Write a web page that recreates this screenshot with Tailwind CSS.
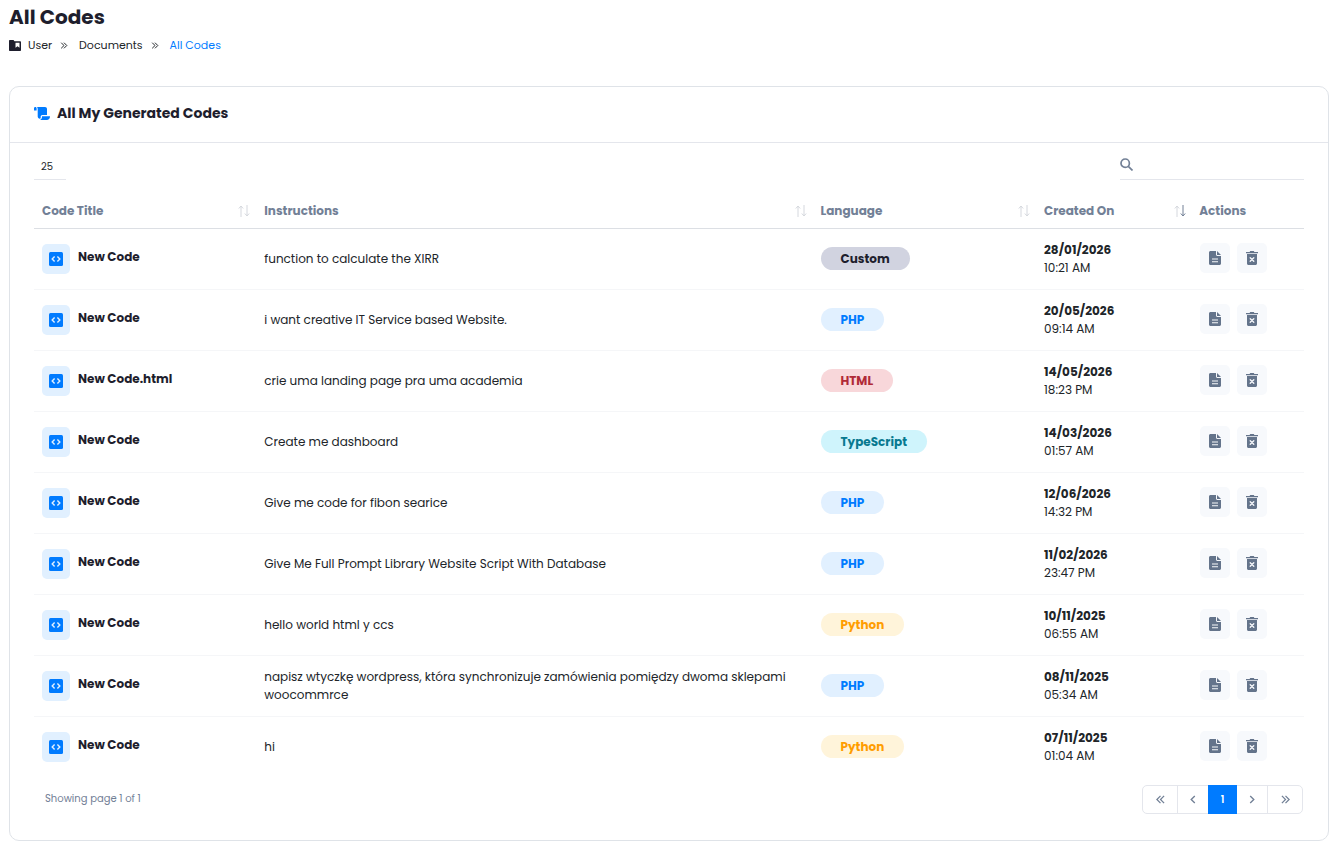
<!DOCTYPE html>
<html lang="en">
<head>
    <meta charset="UTF-8" />
    <meta name="viewport" content="width=device-width, initial-scale=1.0"/>
    <title>All Codes</title>
    <script src="https://cdn.jsdelivr.net/npm/@tailwindcss/browser@4"></script>
</head>
<body class="bg-white font-[Poppins,Inter,sans-serif] text-[12px] leading-[18px] text-[#212529]">

    <!-- icons -->
    <svg class="hidden">
        <symbol id="i-code" viewBox="0 0 14 14">
            <rect width="14" height="14" rx="1.5" fill="#007bff"/>
            <path d="M5.6 4.6 3.2 7l2.4 2.4M8.4 4.6 10.8 7 8.4 9.4" fill="none" stroke="#e1f0ff" stroke-width="1.4"/>
        </symbol>
        <symbol id="i-file" viewBox="0 0 12 14">
            <path fill="currentColor" d="M1.500 0H7v3.500C7 4.300 7.700 5 8.500 5H12v7.500c0 .8-.7 1.500-1.500 1.500h-9C.7 14 0 13.300 0 12.500v-11C0 .7.7 0 1.500 0zM8 0l4 4H8z"/>
            <path d="M3 8h6M3 10.800h6" stroke="#f7f9fc" stroke-width="1.100"/>
        </symbol>
        <symbol id="i-trash" viewBox="0 0 12 14">
            <path fill="currentColor" d="M0 .9h3.6L4.2 0h3.6l.6.9H12v1.4H0zM1 3.1h10v9.4c0 .8-.7 1.5-1.5 1.5h-7C1.7 14 1 13.3 1 12.5z"/>
            <path d="m4.2 6.700 3.600 3.600M7.800 6.700l-3.600 3.600" stroke="#f7f9fc" stroke-width="1.300" stroke-linecap="round"/>
        </symbol>
        <symbol id="i-left" viewBox="0 0 6 10"><path d="M5 1 1 5l4 4" fill="none" stroke="currentColor" stroke-width="1.500"/></symbol>
        <symbol id="i-right" viewBox="0 0 6 10"><path d="m1 1 4 4-4 4" fill="none" stroke="currentColor" stroke-width="1.500"/></symbol>
        <symbol id="i-first" viewBox="0 0 10 10"><path d="M5 1 1 5l4 4M9 1 5 5l4 4" fill="none" stroke="currentColor" stroke-width="1.400"/></symbol>
        <symbol id="i-last" viewBox="0 0 10 10"><path d="m1 1 4 4-4 4M5 1l4 4-4 4" fill="none" stroke="currentColor" stroke-width="1.400"/></symbol>
        <symbol id="i-up" viewBox="0 0 6 12"><path d="M3 12V1M.8 3.500 3 1l2.200 2.500" fill="none" stroke="currentColor"/></symbol>
        <symbol id="i-down" viewBox="0 0 6 12"><path d="M3 0v11M.8 8.500 3 11l2.200-2.500" fill="none" stroke="currentColor"/></symbol>
    </svg>

    <header class="px-[9px] pt-1">
        <h1 class="text-[20px] leading-[26px] font-bold text-[#1e1e2d]">All Codes</h1>
        <nav class="mt-[6px] flex items-center text-[11px]" aria-label="Breadcrumb">
            <svg class="mr-[7px] h-[11px] w-3" viewBox="0 0 12 11">
                <path fill="#1e1e2d" fill-rule="evenodd" d="M1 0h3.500L5.500 1.300H11c.6 0 1 .4 1 1V10c0 .6-.4 1-1 1H1c-.6 0-1-.4-1-1V1c0-.6.4-1 1-1zm5.500 2.800v5L8.500 6.300l2 1.500v-5z"/>
            </svg>
            <a href="#">User</a>
            <svg class="mr-[11px] ml-2 h-[7px] w-2" aria-hidden="true"><use href="#i-last"/></svg>
            <a href="#">Documents</a>
            <svg class="mr-[11px] ml-2 h-[7px] w-2" aria-hidden="true"><use href="#i-last"/></svg>
            <a href="#" class="text-[#007bff]">All Codes</a>
        </nav>
    </header>

    <main class="mx-[9px] mt-8 rounded-[10px] border border-[#dfe3e8]">
        <div class="flex h-14 items-center border-b border-[#e4e6ec] px-6 pb-[3px]">
            <svg class="mr-[7px] h-[13px] w-4" viewBox="0 0 16 13">
                <path fill="#007bff" d="M0 1.300C0 .6.500 0 1.300 0s1.300.6 1.300 1.300V3.500H0zM3 0h8c1.200 0 2 .9 2 2v6H8.500c-1.200 0-1.800.8-1.800 1.800v1c0 .5-.4.900-.9.900-1.200 0-2.100-.9-2.100-2.100V2C3.700 1.200 3.500.500 3 0zM8 9.200h7.800c.2 0 .2.200.2.400 0 2-1.400 3.400-3.200 3.400H5.900C7.300 12.500 8 11.300 8 9.800z"/>
            </svg>
            <h2 class="text-[14px] font-bold text-[#1e1e2d]">All My Generated Codes</h2>
        </div>

        <div class="px-6 pt-[11px] pb-[26px]">
            <div class="flex h-[26px] items-end justify-between">
                <select aria-label="Rows per page" class="h-[26px] w-8 appearance-none border-b border-[#e4e6ec] pt-px pl-[7px] text-[10px] outline-none">
                    <option>25</option>
                </select>
                <label class="flex h-[26px] w-[184px] items-start border-b border-[#e4e6ec]">
                    <svg class="mt-1 size-[13px] shrink-0 text-[#728096]" viewBox="0 0 13 13" fill="none" stroke="currentColor" stroke-width="1.700"><circle cx="5.200" cy="5.200" r="4.200"/><path d="m8.300 8.300 4.200 4.200"/></svg>
                    <input type="search" aria-label="Search" class="h-6 w-full min-w-0 px-2 outline-none">
                </label>
            </div>

            <table class="w-full table-fixed text-left">
                <thead class="border-b border-[#dcdfe4] text-[#728096]">
                    <tr class="h-12">
                        <th class="w-[17.5%] pt-[14px] pr-[6px] pl-2 font-bold"><div class="flex items-center justify-between">Code Title<span class="flex text-[#d5d8de]"><svg class="h-3 w-[6px]"><use href="#i-up"/></svg><svg class="h-3 w-[6px]"><use href="#i-down"/></svg></span></div></th>
                        <th class="w-[43.8%] pt-[14px] pr-[6px] pl-2 font-bold"><div class="flex items-center justify-between">Instructions<span class="flex text-[#d5d8de]"><svg class="h-3 w-[6px]"><use href="#i-up"/></svg><svg class="h-3 w-[6px]"><use href="#i-down"/></svg></span></div></th>
                        <th class="w-[17.6%] pt-[14px] pr-[6px] pl-2 font-bold"><div class="flex items-center justify-between">Language<span class="flex text-[#d5d8de]"><svg class="h-3 w-[6px]"><use href="#i-up"/></svg><svg class="h-3 w-[6px]"><use href="#i-down"/></svg></span></div></th>
                        <th class="w-[12.3%] pt-[14px] pr-[6px] pl-2 font-bold"><div class="flex items-center justify-between">Created On<span class="flex text-[#d5d8de]"><svg class="h-3 w-[6px]"><use href="#i-up"/></svg><svg class="h-3 w-[6px] text-[#728096]"><use href="#i-down"/></svg></span></div></th>
                        <th class="pt-[14px] pl-[7px] font-bold">Actions</th>
                    </tr>
                </thead>
                <tbody id="codes-body"></tbody>
            </table>

            <div class="mt-2 flex items-center justify-between">
                <p class="pb-[2px] pl-[11px] text-[10px] text-[#728096]">Showing page 1 of 1</p>
                <nav class="mr-px flex h-[29px] rounded-[5px] border border-[#e4e6ec] text-[#728096]" aria-label="Pagination">
                    <button aria-label="First page" class="flex w-[35px] items-center justify-center border-r border-[#e4e6ec]"><svg class="size-[9px]"><use href="#i-first"/></svg></button>
                    <button aria-label="Previous page" class="flex w-[30px] items-center justify-center"><svg class="h-[9px] w-[6px]"><use href="#i-left"/></svg></button>
                    <button class="-my-px w-[29px] bg-[#007bff] text-[10px] font-semibold text-white">1</button>
                    <button aria-label="Next page" class="flex w-[31px] items-center justify-center border-r border-[#e4e6ec]"><svg class="h-[9px] w-[6px]"><use href="#i-right"/></svg></button>
                    <button aria-label="Last page" class="flex w-[34px] items-center justify-center"><svg class="size-[9px]"><use href="#i-last"/></svg></button>
                </nav>
            </div>
        </div>
    </main>

    <script>
        const badges = {
            Custom: 'bg-[#d1d3e0] text-[#1e1e2d]',
            PHP: 'bg-[#e1f0ff] text-[#007bff]',
            HTML: 'bg-[#f8d7da] text-[#b02a37]',
            TypeScript: 'bg-[#cff4fc] text-[#087990]',
            Python: 'bg-[#fff4da] text-[#ff9d00]',
        };

        const codes = [
            ['New Code', 'function to calculate the XIRR', 'Custom', '28/01/2026', '10:21 AM'],
            ['New Code', 'i want creative IT Service based Website.', 'PHP', '20/05/2026', '09:14 AM'],
            ['New Code.html', 'crie uma landing page pra uma academia', 'HTML', '14/05/2026', '18:23 PM'],
            ['New Code', 'Create me dashboard', 'TypeScript', '14/03/2026', '01:57 AM'],
            ['New Code', 'Give me code for fibon searice', 'PHP', '12/06/2026', '14:32 PM'],
            ['New Code', 'Give Me Full Prompt Library Website Script With Database', 'PHP', '11/02/2026', '23:47 PM'],
            ['New Code', 'hello world html y ccs', 'Python', '10/11/2025', '06:55 AM'],
            ['New Code', 'napisz wtyczkę wordpress, która synchronizuje zamówienia pomiędzy dwoma sklepami woocommrce', 'PHP', '08/11/2025', '05:34 AM'],
            ['New Code', 'hi', 'Python', '07/11/2025', '01:04 AM'],
        ];

        document.getElementById('codes-body').innerHTML = codes.map(([title, text, lang, date, time]) => `
            <tr class="h-[61px] border-b border-[#f5f6f8] last:border-b-0">
                <td class="px-2">
                    <div class="flex items-start">
                        <span class="mr-2 flex h-[30px] w-7 items-center justify-center rounded-[5px] bg-[#e1f0ff]"><svg class="size-[14px]"><use href="#i-code"/></svg></span>
                        <a href="#" class="mt-1 font-bold text-[#1e1e2d]">${title}</a>
                    </div>
                </td>
                <td class="px-2">${text}</td>
                <td class="px-2"><span class="inline-block h-[23px] rounded-full px-5 align-middle leading-[23px] font-bold ${badges[lang]}">${lang}</span></td>
                <td class="px-2"><span class="block font-bold">${date}</span><span class="block">${time}</span></td>
                <td class="pb-px pl-2">
                    <div class="flex gap-[7px] text-[#64748b]">
                        <button aria-label="View" class="flex size-[30px] items-center justify-center rounded-[5px] bg-[#f7f9fc]"><svg class="h-[14px] w-3"><use href="#i-file"/></svg></button>
                        <button aria-label="Delete" class="flex size-[30px] items-center justify-center rounded-[5px] bg-[#f7f9fc]"><svg class="h-[14px] w-3"><use href="#i-trash"/></svg></button>
                    </div>
                </td>
            </tr>`).join('');
    </script>
</body>
</html>
